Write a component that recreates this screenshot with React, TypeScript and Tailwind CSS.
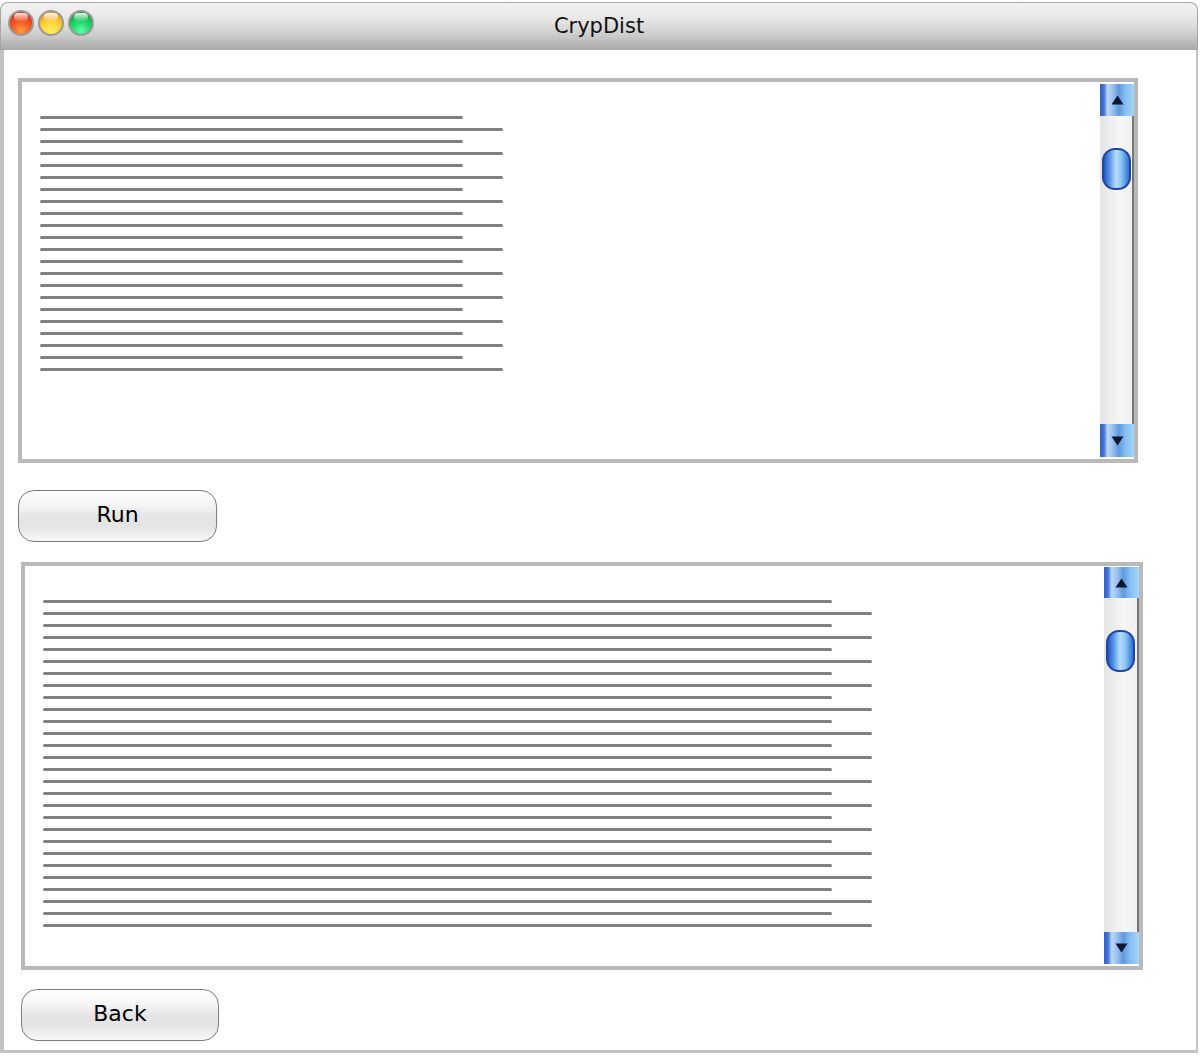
import React from 'react'

const FONT = { fontFamily: '"DejaVu Sans", "Liberation Sans", sans-serif' }

function Light({ kind }: { kind: 'red' | 'yellow' | 'green' }) {
  const fills: Record<string, string> = {
    red: 'bg-[radial-gradient(circle_at_50%_85%,#ff9a3a_0%,#f25a22_45%,#d92a1c_80%)]',
    yellow: 'bg-[radial-gradient(circle_at_50%_85%,#fff35a_0%,#ffcf3a_45%,#f29a1e_85%)]',
    green: 'bg-[radial-gradient(circle_at_50%_85%,#5cffa8_0%,#22d46a_45%,#129a3a_85%)]',
  }
  return (
    <div className={`relative w-[26px] h-[26px] rounded-full border-2 border-[#9a9a9a] ${fills[kind]}`}>
      <div className="absolute left-[4px] top-[1px] w-[14px] h-[8px] rounded-full bg-gradient-to-b from-white/90 to-white/10" />
    </div>
  )
}

function Arrow({ dir, h }: { dir: 'up' | 'down'; h: number }) {
  return (
    <div
      className="w-full flex items-center justify-center bg-[linear-gradient(to_right,#2f5fc8_0%,#4576d4_12%,#bcd6f5_22%,#9ec4ef_36%,#5f98e0_55%,#86bff2_75%,#a2d6fa_100%)]"
      style={{ height: h }}
    >
      <svg width="13" height="10" viewBox="0 0 13 10">
        {dir === 'up' ? (
          <polygon points="6.5,0.5 12.5,9.5 0.5,9.5" fill="#0b1630" />
        ) : (
          <polygon points="0.5,0.5 12.5,0.5 6.5,9.5" fill="#0b1630" />
        )}
      </svg>
    </div>
  )
}

function ScrollBar({ top, upH, downH, bottom, w }: { top: number; upH: number; downH: number; bottom: number; w: number }) {
  return (
    <div className="flex flex-col flex-shrink-0" style={{ width: w, paddingTop: top, paddingBottom: bottom }}>
      <Arrow dir="up" h={upH} />
      <div className="flex-1 border-r-2 border-[#767676] bg-[linear-gradient(to_right,#e4e4e4,#f6f6f6_60%,#f0f0f0)] pt-[32px] flex justify-center">
        <div className="w-[29px] h-[42px] rounded-[13px] border-2 border-[#1f46a6] bg-[linear-gradient(to_right,#2656c2_0%,#4f8fe6_20%,#b6dcfa_48%,#86c4f4_70%,#3370d0_100%)]" />
      </div>
      <Arrow dir="down" h={downH} />
    </div>
  )
}

function TextBox({
  lines,
  short,
  long,
  className,
  bar,
}: {
  lines: number
  short: number
  long: number
  className: string
  bar: React.ReactNode
}) {
  return (
    <div className={`flex border-4 border-[#b9b9b9] bg-white ${className}`}>
      <div className="flex-1 pl-[18px] pt-[34px] flex flex-col gap-[9px]">
        {Array.from({ length: lines }).map((_, i) => (
          <div
            key={i}
            className="h-[3px] rounded-full bg-[#808080]"
            style={{ width: i % 2 === 0 ? short : long }}
          />
        ))}
      </div>
      {bar}
    </div>
  )
}

function AquaButton({ label, className }: { label: string; className: string }) {
  return (
    <button
      className={`h-[52px] rounded-[16px] border-[1.5px] border-[#7d7d7d] bg-[linear-gradient(to_bottom,#ffffff_0%,#f4f4f4_30%,#e4e4e4_52%,#e6e6e6_75%,#f9f9f9_100%)] text-[22px] text-black flex items-center justify-center pb-[3px] ${className}`}
      style={FONT}
    >
      {label}
    </button>
  )
}

export default function App() {
  return (
    <div className="w-[1200px] h-[1056px] bg-white pt-[2px]" style={FONT}>
      <div className="w-[1198px] h-[1051px] flex flex-col">
        {/* Title bar */}
        <div className="relative h-[48px] flex-shrink-0 rounded-t-[8px] border border-b-0 border-[#a6a6a6] bg-[linear-gradient(to_bottom,#f2f2f2_0%,#e6e6e6_35%,#cfcfcf_65%,#a9a9a9_100%)] flex items-center justify-center">
          <div className="absolute left-[7px] top-[7px] flex gap-[4px]">
            <Light kind="red" />
            <Light kind="yellow" />
            <Light kind="green" />
          </div>
          <span className="text-[21px] text-[#111]">CrypDist</span>
        </div>

        {/* Content */}
        <div className="flex-1 border-l-4 border-r-2 border-b-[3px] border-[#c3c3c3] bg-white pl-[14px] pt-[28px] flex flex-col items-start">
          <TextBox
            lines={22}
            short={423}
            long={463}
            className="w-[1120px] h-[385px]"
            bar={<ScrollBar top={2} upH={32} downH={33} bottom={2} w={34} />}
          />
          <AquaButton label="Run" className="w-[199px] mt-[27px]" />
          <TextBox
            lines={28}
            short={789}
            long={829}
            className="w-[1122px] h-[408px] mt-[20px] ml-[3px]"
            bar={<ScrollBar top={1} upH={31} downH={32} bottom={2} w={35} />}
          />
          <AquaButton label="Back" className="w-[198px] mt-[19px] ml-[3px]" />
        </div>
      </div>
    </div>
  )
}
